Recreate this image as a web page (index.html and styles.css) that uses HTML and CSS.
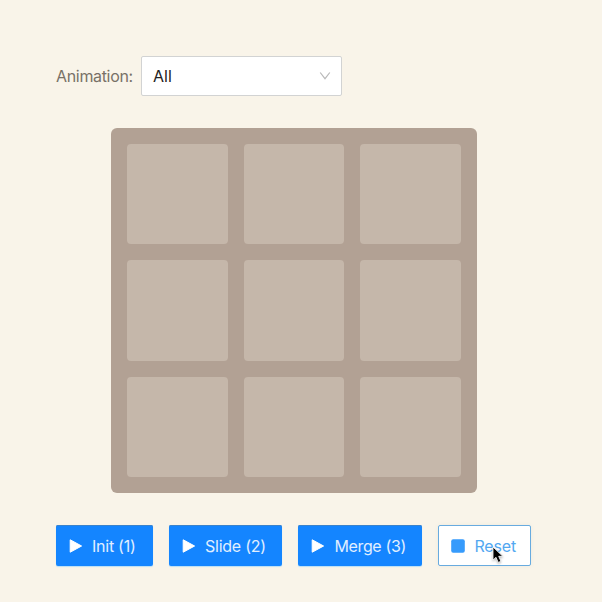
FILE: index.html
```html
<!DOCTYPE html>
<html lang="en">
<head>
<meta charset="utf-8">
<title>Board animation</title>
<link rel="stylesheet" href="styles.css">
</head>
<body>
<main class="page">
  <div class="toolbar">
    <span class="label">Animation:</span>
    <div class="select" role="combobox" aria-expanded="false">
      <span class="value">All</span>
      <svg class="chevron" width="12" height="10" viewBox="0 0 12 10"><path d="M1.2 1.5 6 7.7 10.8 1.5" fill="none" stroke="#b9b9b9" stroke-width="1.2"/></svg>
    </div>
  </div>
  <div class="board">
    <div class="cell"></div><div class="cell"></div><div class="cell"></div>
    <div class="cell"></div><div class="cell"></div><div class="cell"></div>
    <div class="cell"></div><div class="cell"></div><div class="cell"></div>
  </div>
  <div class="actions">
    <button class="btn init"><svg class="icon" width="14" height="14" viewBox="0 0 14 14"><path d="M1.2 .8 12.6 7 1.2 13.2Z" fill="#fff" stroke="#fff" stroke-linejoin="round"/></svg><span class="text">Init (1)</span></button>
    <button class="btn slide"><svg class="icon" width="14" height="14" viewBox="0 0 14 14"><path d="M1.2 .8 12.6 7 1.2 13.2Z" fill="#fff" stroke="#fff" stroke-linejoin="round"/></svg><span class="text">Slide (2)</span></button>
    <button class="btn merge"><svg class="icon" width="14" height="14" viewBox="0 0 14 14"><path d="M1.2 .8 12.6 7 1.2 13.2Z" fill="#fff" stroke="#fff" stroke-linejoin="round"/></svg><span class="text">Merge (3)</span></button>
    <button class="btn reset"><svg class="icon" width="14" height="14" viewBox="0 0 14 14"><rect x=".2" y=".2" width="13.6" height="13.6" rx="2" fill="#369bfc"/></svg><span class="text">Reset</span>
      <svg class="cursor" width="14" height="19" viewBox="0 0 14 19"><path d="M1 1v13.1l3-2.8 2.2 5.1 2.7-1.1-2.2-5h4.1Z" fill="#000" stroke="#fff" stroke-width=".8"/></svg>
    </button>
  </div>
</main>
</body>
</html>
```
FILE: styles.css
```css
* { box-sizing: border-box; }
body {
  margin: 0;
  background: #f9f4e9;
  font-family: Inter, "Liberation Sans", sans-serif;
  font-size: 16px;
}
.page { height: 602px; padding: 56px 56px 0; overflow: hidden; }
.toolbar { display: flex; align-items: center; height: 40px; }
.label { width: 85px; color: #787167; letter-spacing: -0.33px; white-space: nowrap; }
.select {
  display: flex;
  align-items: center;
  justify-content: space-between;
  width: 201px;
  height: 40px;
  padding: 0 10px 0 11px;
  border: 1px solid #d2d3d3;
  border-radius: 2px;
  background: #fff;
  color: #222;
}
.board {
  display: grid;
  grid-template-columns: repeat(3, 100.5px);
  grid-auto-rows: 100.4px;
  gap: 16px;
  width: 365.4px;
  height: 365px;
  margin: 32px 0 0 55.3px;
  padding: 16px;
  border-radius: 6px;
  background: #b2a194;
}
.cell { border-radius: 4px; background: #c5b7aa; }
.actions { display: flex; gap: 16px; margin-top: 32px; }
.btn {
  position: relative;
  display: flex;
  align-items: center;
  gap: 9px;
  height: 40.5px;
  padding: 1px 0 0 13px;
  border: 0;
  border-radius: 2px;
  background: #1485ff;
  color: #e0efff;
  font: inherit;
  letter-spacing: -0.25px;
  white-space: nowrap;
  box-shadow: 0 1px 1px #b9def5, inset 0 1px #3b83cb;
}
.init { width: 97px; }
.slide { width: 113.4px; }
.merge { width: 123.5px; letter-spacing: -0.35px; }
.reset {
  width: 93.5px;
  border: 1px solid #68abdf;
  padding-left: 12.5px;
  background: #fff;
  color: #52a8f1;
  letter-spacing: -0.15px;
  box-shadow: 0 0 4px #eeeae0;
}
.cursor { position: absolute; left: 53.5px; top: 20px; filter: drop-shadow(0 1px 1px rgba(0, 0, 0, .3)); }
```
